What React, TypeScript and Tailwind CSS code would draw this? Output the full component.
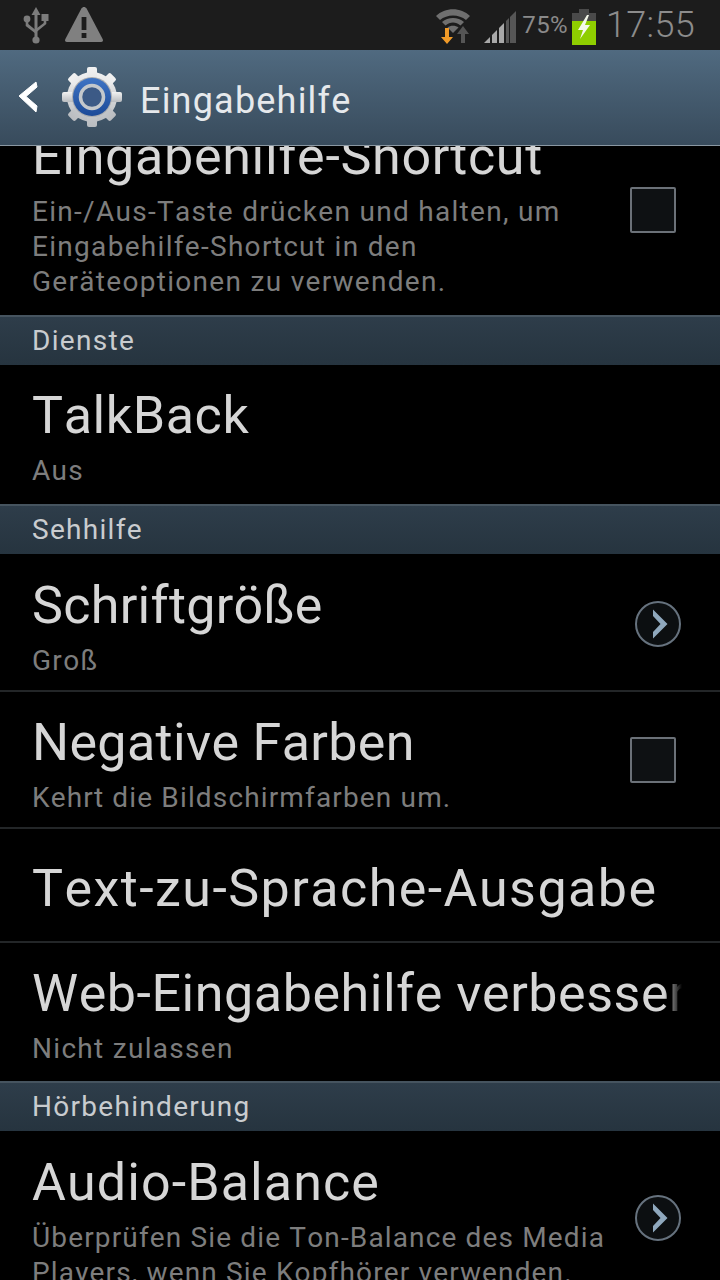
import React from "react";

const font = { fontFamily: "Roboto, sans-serif" };

function Checkbox() {
  return <div className="h-[46px] w-[46px] shrink-0 rounded-[2px] border-2 border-[#6b7178] bg-[#0e1113]" />;
}

function ArrowCircle() {
  return (
    <svg width="46" height="46" viewBox="0 0 46 46" className="shrink-0">
      <circle cx="23" cy="23" r="22" fill="#0c0f11" stroke="#66727e" strokeWidth="2" />
      <path d="M18 8.5 L32.5 23 L18 37.5 L18 31 L25.5 23 L18 15 Z" fill="#8fa8bd" />
    </svg>
  );
}

function Section({ label, h }: { label: string; h: string }) {
  return (
    <div className={`${h} flex shrink-0 items-center border-t-2 border-[#46545f] bg-gradient-to-b from-[#2e3d4a] to-[#26343f] pl-[32px] text-[28px] leading-none tracking-[1.3px] text-[#c9cccf] [font-kerning:none]`}>
      {label}
    </div>
  );
}

type RowProps = {
  title: string;
  sub?: string[];
  h: string;
  titleClass?: string;
  tracking: string;
  subTracking?: string;
  divider?: boolean;
  right?: React.ReactNode;
};

function Row({ title, sub, h, titleClass = "", tracking, subTracking = "tracking-[1.3px]", divider, right }: RowProps) {
  return (
    <div className={`${h} ${divider ? "border-b-2 border-[#232628]" : ""} relative flex shrink-0 items-start overflow-hidden pl-[32px] [font-kerning:none]`}>
      <div className={`min-w-0 flex-1 ${titleClass}`}>
        <div className={`h-[69px] whitespace-nowrap text-[52px] leading-[64px] ${tracking} text-[#d6d6d6]`}>{title}</div>
        {sub?.map((line) => (
          <div key={line} className={`h-[35px] whitespace-nowrap text-[28px] leading-[35px] ${subTracking} text-[#7d7d7d]`}>{line}</div>
        ))}
      </div>
      {right}
    </div>
  );
}

export default function App() {
  return (
    <div style={font} className="flex h-[1280px] w-[720px] flex-col overflow-hidden bg-black">
      {/* status bar */}
      <div className="flex h-[50px] shrink-0 items-center bg-[#1c1c1c] pr-[25px]">
        <svg width="28" height="40" viewBox="0 0 28 40" className="ml-[22px] mt-[-1px]">
          <g fill="#7c7c7c">
            <path d="M14 2 L18.5 10 L15.5 10 L15.5 32 L12.5 32 L12.5 10 L9.5 10 Z" />
            <circle cx="14" cy="35" r="3.6" />
            <circle cx="5" cy="14" r="3.4" />
            <rect x="19.5" y="9" width="7" height="7" />
            <path d="M3.7 15 L6.3 15 L6.3 19 L13.5 25 L13.5 28.5 L3.7 21 Z" />
            <path d="M21.7 15 L24.3 15 L24.3 19 L14.5 27 L14.5 23.5 L21.7 18 Z" />
          </g>
        </svg>
        <svg width="40" height="38" viewBox="0 0 40 38" className="ml-[14px]">
          <path d="M20 1 C21 1 22 1.6 22.6 2.6 L38.6 33 C39.6 35 38.6 36 37 36 L3 36 C1.4 36 .4 35 1.4 33 L17.4 2.6 C18 1.6 19 1 20 1 Z" fill="#808080" />
          <rect x="17.6" y="11" width="4.8" height="13" fill="#1c1c1c" />
          <rect x="17.6" y="27" width="4.8" height="5" fill="#1c1c1c" />
        </svg>
        <div className="flex-1" />
        <svg width="36" height="38" viewBox="0 0 36 38" className="mr-[12px]">
          <path d="M1 10 C10 1 26 1 35 10 L31 14 C24 8 12 8 5 14 Z" fill="#6f6f6f" />
          <path d="M7 16 C13 10.500 23 10.500 29 16 L25.500 19.500 C21 15.500 15 15.500 10.500 19.500 Z" fill="#6f6f6f" />
          <path d="M12.500 21.500 C15.500 19 20.500 19 23.500 21.500 L18 27 Z" fill="#6f6f6f" />
          <path d="M22 28 L28 20 L34 28 L30 28 L30 37 L26 37 L26 28 Z" fill="#555" />
          <path d="M10 27 L14 27 L14 36 L18 36 L12 43 L6 36 L10 36 Z" fill="#f09a28" transform="translate(0 -5)" />
        </svg>
        <svg width="34" height="34" viewBox="0 0 34 34" className="mt-[4px]">
          <path d="M1 33 L7 27 L7 33 Z" fill="#a8a8a8" />
          <path d="M9 25 L14 20 L14 33 L9 33 Z" fill="#a8a8a8" />
          <path d="M16 18 L21 13 L21 33 L16 33 Z" fill="#a8a8a8" />
          <path d="M23 11 L26 8 L26 33 L23 33 Z" fill="#565656" />
          <path d="M27 7 L33 1 L33 33 L27 33 Z" fill="#565656" />
        </svg>
        <span className="ml-[5px] text-[24px] leading-none tracking-[0.4px] text-[#8a8a8a]">75%</span>
        <svg width="24" height="36" viewBox="0 0 24 36" className="ml-[4px] mt-[4px]">
          <rect x="7" y="0" width="10" height="4" fill="#4a4a4a" />
          <rect x="0" y="4" width="24" height="8" fill="#4a4a4a" />
          <rect x="0" y="12" width="24" height="24" fill="#8fce00" />
          <path d="M15 6 L6 21 L11 21 L8 30 L18 16 L13 16 L17 6 Z" fill="#f4f8ea" />
        </svg>
        <span className="ml-[10px] text-[36px] font-light leading-none tracking-[0.3px] text-[#8c8c8c]">17:55</span>
      </div>

      {/* action bar */}
      <div className="flex h-[96px] shrink-0 items-center border-b border-[#8a97a2] bg-gradient-to-b from-[#506a80] to-[#384b5c] pb-[2px]">
        <svg width="22" height="32" viewBox="0 0 22 32" className="ml-[17px]">
          <path d="M19 1 L2 15 L19 31 L20 25 L9 15.500 L20 6 Z" fill="#ffffff" stroke="#ffffff" strokeWidth="1" strokeLinejoin="round" />
        </svg>
        <svg width="62" height="62" viewBox="0 0 62 62" className="ml-[22px]">
          <defs>
            <linearGradient id="steel" x1="0" y1="0" x2="0" y2="1">
              <stop offset="0" stopColor="#f2f2f2" />
              <stop offset="1" stopColor="#b9bcc0" />
            </linearGradient>
            <linearGradient id="ring" x1="0" y1="0" x2="0" y2="1">
              <stop offset="0" stopColor="#3f74c4" />
              <stop offset="1" stopColor="#1c4a98" />
            </linearGradient>
          </defs>
          <g fill="url(#steel)">
            <circle cx="31" cy="31" r="25" />
            <rect x="26" y="1" width="10" height="60" rx="2" />
            <rect x="1" y="26" width="60" height="10" rx="2" />
            <rect x="26" y="1" width="10" height="60" rx="2" transform="rotate(45 31 31)" />
            <rect x="26" y="1" width="10" height="60" rx="2" transform="rotate(-45 31 31)" />
          </g>
          <circle cx="31" cy="31" r="20" fill="#a9acb0" />
          <circle cx="31" cy="31" r="19" fill="url(#ring)" />
          <circle cx="31" cy="31" r="11.500" fill="#3c5a86" stroke="#c4c8cc" strokeWidth="3.500" />
        </svg>
        <span className="ml-[17px] mt-[9px] text-[36px] leading-none tracking-[1.2px] text-[#e6e9ec] [font-kerning:none]">Eingabehilfe</span>
      </div>

      {/* settings list, scrolled so that the first row is partly hidden */}
      <div className="flex min-h-0 flex-1 flex-col overflow-hidden">
        <Row
          title="Eingabehilfe-Shortcut"
          tracking="tracking-[0.72px]"
          sub={["Ein-/Aus-Taste drücken und halten, um", "Eingabehilfe-Shortcut in den", "Geräteoptionen zu verwenden."]}
          h="h-[169px]"
          titleClass="mt-[-21px]"
          right={<div className="mr-[44px] mt-[41px]"><Checkbox /></div>}
        />
        <Section label="Dienste" h="h-[50px]" />
        <Row title="TalkBack" tracking="tracking-[0.6px]" sub={["Aus"]} h="h-[139px]" titleClass="mt-[19px]" />
        <Section label="Sehhilfe" h="h-[50px]" />
        <Row
          title="Schriftgröße"
          tracking="tracking-[0.3px]"
          sub={["Groß"]}
          h="h-[138px]"
          titleClass="mt-[20px]"
          divider
          right={<div className="mr-[39px] mt-[47px]"><ArrowCircle /></div>}
        />
        <Row
          title="Negative Farben"
          tracking="tracking-[0.35px]"
          sub={["Kehrt die Bildschirmfarben um."]}
          subTracking="tracking-[1.15px]"
          h="h-[137px]"
          titleClass="mt-[19px]"
          divider
          right={<div className="mr-[44px] mt-[45px]"><Checkbox /></div>}
        />
        <Row title="Text-zu-Sprache-Ausgabe" tracking="tracking-[1.45px]" h="h-[114px]" titleClass="mt-[28px]" divider />
        <div className="relative">
          <Row title="Web-Eingabehilfe verbessern" tracking="tracking-[0.55px]" sub={["Nicht zulassen"]} h="h-[138px]" titleClass="mt-[19px] mr-[38px] overflow-hidden" />
          <div className="absolute left-[664px] top-[18px] h-[64px] w-[18px] bg-gradient-to-r from-transparent to-black" />
        </div>
        <Section label="Hörbehinderung" h="h-[50px]" />
        <Row
          title="Audio-Balance"
          tracking="tracking-[1.1px]"
          sub={["Überprüfen Sie die Ton-Balance des Media", "Players, wenn Sie Kopfhörer verwenden."]}
          subTracking="tracking-[1.15px]"
          h="h-[170px]"
          titleClass="mt-[20px]"
          right={<div className="mr-[39px] mt-[64px]"><ArrowCircle /></div>}
        />
      </div>
    </div>
  );
}
